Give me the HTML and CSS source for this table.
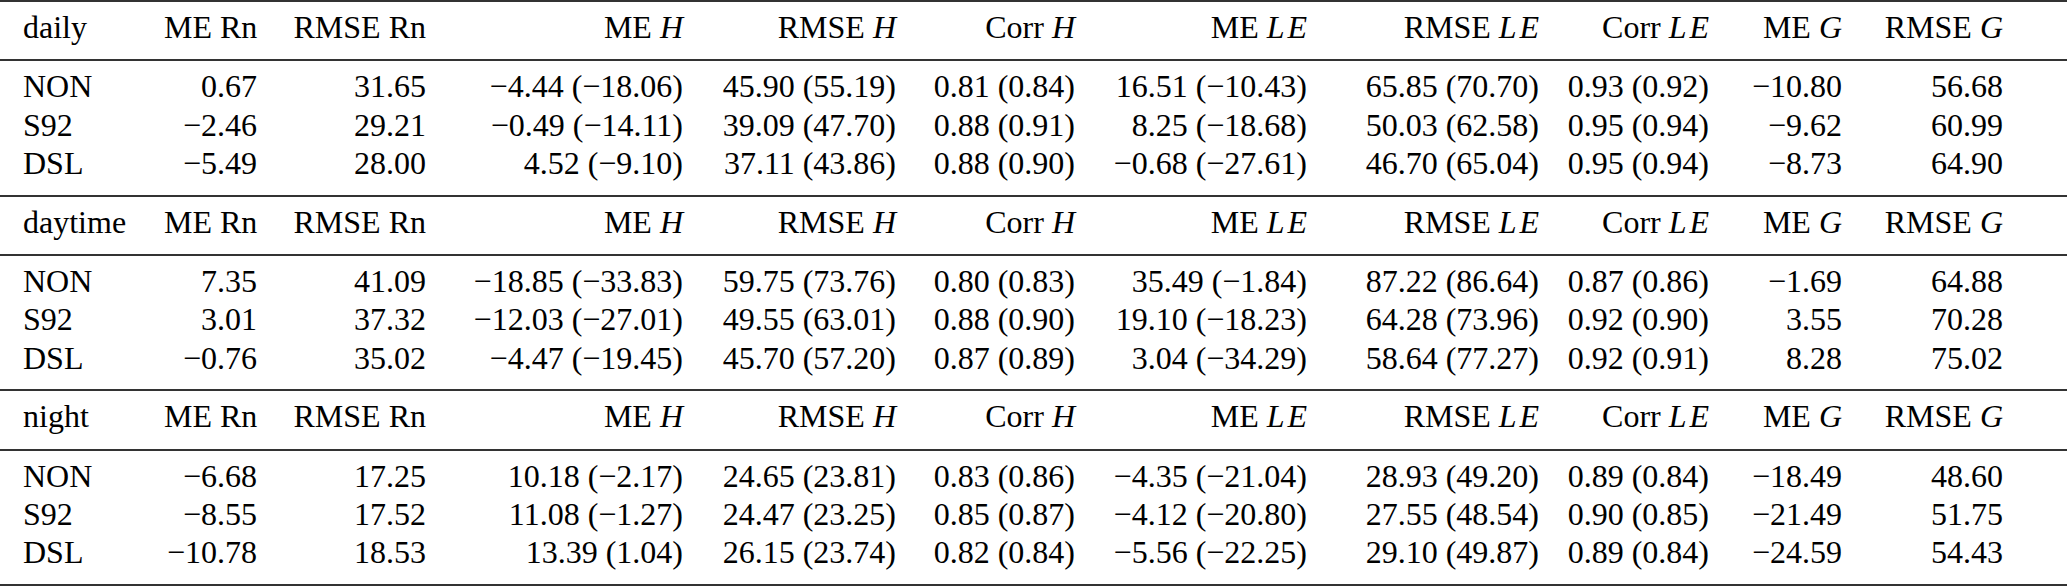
FILE: index.html
```html
<!DOCTYPE html>
<html lang="en">
<head>
<meta charset="utf-8">
<title>Error statistics</title>
<link rel="stylesheet" href="styles.css">
</head>
<body>
<div class="table">
  <section class="block">
    <div class="row head">
      <span class="c">daily</span><span class="c">ME Rn</span><span class="c">RMSE Rn</span><span class="c">ME <i>H</i></span><span class="c">RMSE <i>H</i></span><span class="c">Corr <i>H</i></span><span class="c">ME <i class="le">L</i><i>E</i></span><span class="c">RMSE <i class="le">L</i><i>E</i></span><span class="c">Corr <i class="le">L</i><i>E</i></span><span class="c">ME <i>G</i></span><span class="c">RMSE <i>G</i></span>
    </div>
    <div class="body">
      <div class="row"><span class="c">NON</span><span class="c">0.67</span><span class="c">31.65</span><span class="c">&minus;4.44 (&minus;18.06)</span><span class="c">45.90 (55.19)</span><span class="c">0.81 (0.84)</span><span class="c">16.51 (&minus;10.43)</span><span class="c">65.85 (70.70)</span><span class="c">0.93 (0.92)</span><span class="c">&minus;10.80</span><span class="c">56.68</span></div>
      <div class="row"><span class="c">S92</span><span class="c">&minus;2.46</span><span class="c">29.21</span><span class="c">&minus;0.49 (&minus;14.11)</span><span class="c">39.09 (47.70)</span><span class="c">0.88 (0.91)</span><span class="c">8.25 (&minus;18.68)</span><span class="c">50.03 (62.58)</span><span class="c">0.95 (0.94)</span><span class="c">&minus;9.62</span><span class="c">60.99</span></div>
      <div class="row"><span class="c">DSL</span><span class="c">&minus;5.49</span><span class="c">28.00</span><span class="c">4.52 (&minus;9.10)</span><span class="c">37.11 (43.86)</span><span class="c">0.88 (0.90)</span><span class="c">&minus;0.68 (&minus;27.61)</span><span class="c">46.70 (65.04)</span><span class="c">0.95 (0.94)</span><span class="c">&minus;8.73</span><span class="c">64.90</span></div>
    </div>
  </section>
  <section class="block">
    <div class="row head">
      <span class="c">daytime</span><span class="c">ME Rn</span><span class="c">RMSE Rn</span><span class="c">ME <i>H</i></span><span class="c">RMSE <i>H</i></span><span class="c">Corr <i>H</i></span><span class="c">ME <i class="le">L</i><i>E</i></span><span class="c">RMSE <i class="le">L</i><i>E</i></span><span class="c">Corr <i class="le">L</i><i>E</i></span><span class="c">ME <i>G</i></span><span class="c">RMSE <i>G</i></span>
    </div>
    <div class="body">
      <div class="row"><span class="c">NON</span><span class="c">7.35</span><span class="c">41.09</span><span class="c">&minus;18.85 (&minus;33.83)</span><span class="c">59.75 (73.76)</span><span class="c">0.80 (0.83)</span><span class="c">35.49 (&minus;1.84)</span><span class="c">87.22 (86.64)</span><span class="c">0.87 (0.86)</span><span class="c">&minus;1.69</span><span class="c">64.88</span></div>
      <div class="row"><span class="c">S92</span><span class="c">3.01</span><span class="c">37.32</span><span class="c">&minus;12.03 (&minus;27.01)</span><span class="c">49.55 (63.01)</span><span class="c">0.88 (0.90)</span><span class="c">19.10 (&minus;18.23)</span><span class="c">64.28 (73.96)</span><span class="c">0.92 (0.90)</span><span class="c">3.55</span><span class="c">70.28</span></div>
      <div class="row"><span class="c">DSL</span><span class="c">&minus;0.76</span><span class="c">35.02</span><span class="c">&minus;4.47 (&minus;19.45)</span><span class="c">45.70 (57.20)</span><span class="c">0.87 (0.89)</span><span class="c">3.04 (&minus;34.29)</span><span class="c">58.64 (77.27)</span><span class="c">0.92 (0.91)</span><span class="c">8.28</span><span class="c">75.02</span></div>
    </div>
  </section>
  <section class="block last">
    <div class="row head">
      <span class="c">night</span><span class="c">ME Rn</span><span class="c">RMSE Rn</span><span class="c">ME <i>H</i></span><span class="c">RMSE <i>H</i></span><span class="c">Corr <i>H</i></span><span class="c">ME <i class="le">L</i><i>E</i></span><span class="c">RMSE <i class="le">L</i><i>E</i></span><span class="c">Corr <i class="le">L</i><i>E</i></span><span class="c">ME <i>G</i></span><span class="c">RMSE <i>G</i></span>
    </div>
    <div class="body">
      <div class="row"><span class="c">NON</span><span class="c">&minus;6.68</span><span class="c">17.25</span><span class="c">10.18 (&minus;2.17)</span><span class="c">24.65 (23.81)</span><span class="c">0.83 (0.86)</span><span class="c">&minus;4.35 (&minus;21.04)</span><span class="c">28.93 (49.20)</span><span class="c">0.89 (0.84)</span><span class="c">&minus;18.49</span><span class="c">48.60</span></div>
      <div class="row"><span class="c">S92</span><span class="c">&minus;8.55</span><span class="c">17.52</span><span class="c">11.08 (&minus;1.27)</span><span class="c">24.47 (23.25)</span><span class="c">0.85 (0.87)</span><span class="c">&minus;4.12 (&minus;20.80)</span><span class="c">27.55 (48.54)</span><span class="c">0.90 (0.85)</span><span class="c">&minus;21.49</span><span class="c">51.75</span></div>
      <div class="row"><span class="c">DSL</span><span class="c">&minus;10.78</span><span class="c">18.53</span><span class="c">13.39 (1.04)</span><span class="c">26.15 (23.74)</span><span class="c">0.82 (0.84)</span><span class="c">&minus;5.56 (&minus;22.25)</span><span class="c">29.10 (49.87)</span><span class="c">0.89 (0.84)</span><span class="c">&minus;24.59</span><span class="c">54.43</span></div>
    </div>
  </section>
</div>
</body>
</html>
```

FILE: styles.css
```css
html, body {
  margin: 0;
  padding: 0;
  background: #ffffff;
}

body {
  font-family: "Liberation Serif", "Times New Roman", Tinos, "Nimbus Roman", "DejaVu Serif", serif;
}

.table {
  width: 2067px;
  font-family: "Liberation Serif", "Times New Roman", Tinos, "Nimbus Roman", "DejaVu Serif", serif;
  font-size: 32px;
  line-height: 38.4px;
  color: #000000;
}

.block {
  border-top: 2px solid #333333;
}

.block.last {
  border-bottom: 2px solid #333333;
}

.row {
  display: grid;
  grid-template-columns: 164px 93px 169px 257px 213px 179px 232px 232px 170px 133px 161px 1fr;
  white-space: nowrap;
}

.row .c {
  text-align: right;
}

.row .c:first-child {
  text-align: left;
  padding-left: 23px;
}

.head {
  padding: 6px 0 13px;
  border-bottom: 2px solid #333333;
}

.body {
  padding: 6px 0 12px;
}

.row i {
  font-family: "Liberation Serif", "Times New Roman", Tinos, "DejaVu Serif", serif;
  font-style: italic;
}

i.le {
  letter-spacing: 0.09em;
}
```
